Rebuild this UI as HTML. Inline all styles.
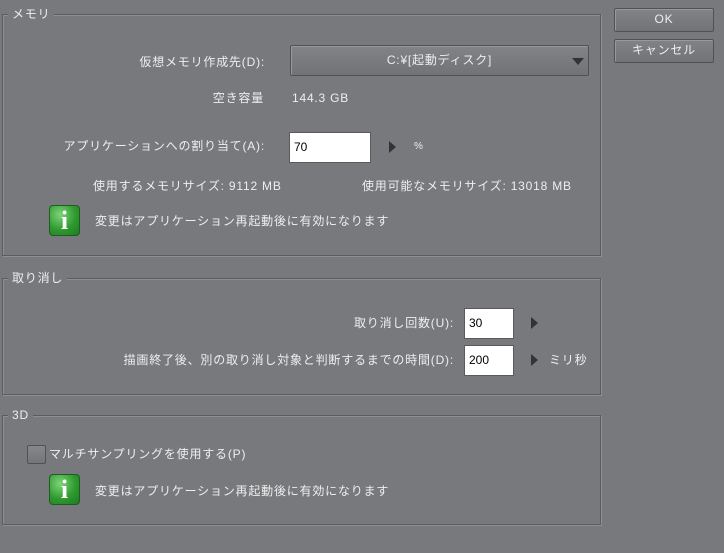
<!DOCTYPE html>
<html><head><meta charset="utf-8"><style>
*{margin:0;padding:0;box-sizing:border-box}
body{width:724px;height:553px;background:#78797c;position:relative;overflow:hidden;font-family:"Liberation Sans","Noto Sans CJK JP",sans-serif;font-size:12px;color:#eeeeee;letter-spacing:0.8px}
.a{position:absolute;white-space:nowrap;line-height:14px}
.r{text-align:right}
.g{position:absolute;border:1px solid #5b5c5f;box-shadow:inset 1px 1px 0 #8e8f92,1px 1px 0 #8e8f92}
.lg{position:absolute;background:#78797c;padding:0 4px;line-height:14px}
.inp{position:absolute;background:#fff;border:1px solid #5a5a5a;color:#000;padding-left:4px;line-height:28px;font-size:12px;letter-spacing:0}
.btn{position:absolute;border:1px solid #505154;border-radius:2px;background:linear-gradient(#828386,#727376);box-shadow:inset 1px 1px 0 #98999c;text-align:center;line-height:21px}
.tri{position:absolute;width:0;height:0;border-top:6px solid transparent;border-bottom:6px solid transparent;border-left:7px solid #333}
.info{position:absolute;width:31px;height:31px;border-radius:4px;background:radial-gradient(circle at 35% 30%,#7fd47a,#2f9a2f 55%,#1e7a22);border:1px solid #1d5e20;color:#fff;font-family:"Liberation Serif",serif;font-weight:bold;font-size:26px;text-align:center;line-height:30px;letter-spacing:0}
</style></head><body>
<div class="g" style="left:2px;top:14px;width:599px;height:242px"></div>
<div class="lg" style="left:8px;top:7px">メモリ</div>
<div class="a r" style="left:40px;width:225px;top:55px">仮想メモリ作成先(D):</div>
<div class="btn" style="left:290px;top:45px;width:299px;height:31px;line-height:29px;border-radius:2px">C:¥[起動ディスク]</div>
<div style="position:absolute;left:572px;top:58px;border-left:6px solid transparent;border-right:6px solid transparent;border-top:7px solid #333"></div>
<div class="a r" style="left:40px;width:224px;top:91px">空き容量</div>
<div class="a" style="left:292px;top:91px">144.3 GB</div>
<div class="a r" style="left:10px;width:255px;top:139px">アプリケーションへの割り当て(A):</div>
<div class="inp" style="left:289px;top:132px;width:82px;height:31px">70</div>
<div class="tri" style="left:389px;top:141px"></div>
<div class="a" style="left:414px;top:140px;font-size:10px">%</div>
<div class="a" style="left:93px;top:179px">使用するメモリサイズ: 9112 MB</div>
<div class="a" style="left:362px;top:179px">使用可能なメモリサイズ: 13018 MB</div>
<div class="info" style="left:49px;top:205px">i</div>
<div class="a" style="left:95px;top:214px">変更はアプリケーション再起動後に有効になります</div>

<div class="g" style="left:2px;top:278px;width:599px;height:117px"></div>
<div class="lg" style="left:8px;top:271px">取り消し</div>
<div class="a r" style="left:200px;width:254px;top:316px">取り消し回数(U):</div>
<div class="inp" style="left:464px;top:308px;width:50px;height:31px">30</div>
<div class="tri" style="left:531px;top:317px"></div>
<div class="a r" style="left:30px;width:424px;top:353px">描画終了後、別の取り消し対象と判断するまでの時間(D):</div>
<div class="inp" style="left:464px;top:345px;width:50px;height:31px">200</div>
<div class="tri" style="left:531px;top:354px"></div>
<div class="a" style="left:549px;top:353px">ミリ秒</div>

<div class="g" style="left:2px;top:415px;width:599px;height:110px"></div>
<div class="lg" style="left:8px;top:408px">3D</div>
<div style="position:absolute;left:27px;top:445px;width:19px;height:19px;border:1px solid #505154;border-radius:2px;background:linear-gradient(#86878a,#75767a)"></div>
<div class="a" style="left:49px;top:447px">マルチサンプリングを使用する(P)</div>
<div class="info" style="left:49px;top:474px">i</div>
<div class="a" style="left:95px;top:484px">変更はアプリケーション再起動後に有効になります</div>

<div class="btn" style="left:614px;top:8px;width:100px;height:24px">OK</div>
<div class="btn" style="left:614px;top:39px;width:100px;height:24px">キャンセル</div>
</body></html>
